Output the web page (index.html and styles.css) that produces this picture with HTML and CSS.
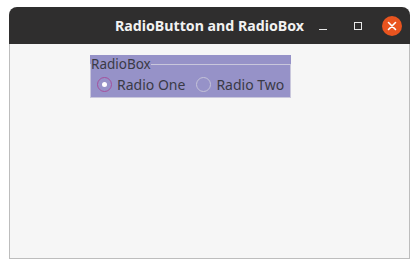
FILE: index.html
```html
<!DOCTYPE html>
<html lang="en">
<head>
    <meta charset="UTF-8">
    <title>RadioButton and RadioBox</title>
    <link rel="stylesheet" href="styles.css">
</head>
<body>
    <div class="window">
        <div class="titlebar">
            <span></span>
            <span class="title">RadioButton and RadioBox</span>
            <div class="controls">
                <span class="btn-min"></span>
                <span class="btn-max"></span>
                <span class="btn-close">
                    <svg width="20" height="20" viewBox="0 0 20 20">
                        <path d="M6.5 6.5 L13.5 13.5 M13.5 6.5 L6.5 13.5" stroke="#fff" stroke-width="1.6" stroke-linecap="round"/>
                    </svg>
                </span>
            </div>
        </div>
        <div class="content">
            <div class="radiobox">
                <fieldset>
                    <legend>RadioBox</legend>
                    <div class="options">
                        <label class="option"><span class="radio checked"></span>Radio One</label>
                        <label class="option"><span class="radio"></span>Radio Two</label>
                    </div>
                </fieldset>
            </div>
        </div>
    </div>
</body>
</html>
```

FILE: styles.css
```css
body {
    margin: 0;
    background-color: #ffffff;
    font-family: "Noto Sans", "DejaVu Sans", sans-serif;
}
.window {
    margin: 7px 0 0 9px;
    width: 401px;
    height: 252px;
    display: flex;
    flex-direction: column;
}
.titlebar {
    height: 37px;
    background-color: #2f2e2e;
    border-radius: 8px 8px 0 0;
    display: grid;
    grid-template-columns: 1fr auto 1fr;
    align-items: center;
}
.title {
    color: #f2f2f2;
    font-weight: bold;
    font-size: 14.2px;
}
.controls {
    display: flex;
    justify-content: flex-end;
    align-items: center;
    padding-right: 8px;
}
.btn-min {
    width: 8px;
    height: 1px;
    background-color: #e8e8e8;
    margin-top: 7px;
    margin-right: 27px;
}
.btn-max {
    width: 6px;
    height: 6px;
    border: 1px solid #e8e8e8;
    margin-right: 20px;
}
.btn-close {
    width: 20px;
    height: 20px;
    border-radius: 50%;
    background-color: #e9541f;
    display: flex;
}
.content {
    flex: 1;
    background-color: #f6f6f6;
    border: 1px solid #bdbdbd;
    border-top: none;
    padding: 11px 0 0 80px;
}
.radiobox {
    width: 201px;
    background-color: #9692c8;
}
fieldset {
    margin: 0;
    padding: 0;
    border: 1px solid #c9c7dc;
}
legend {
    padding: 0;
    font-size: 13.5px;
    line-height: 18px;
    color: #3a3a46;
}
.options {
    display: flex;
    align-items: center;
    padding: 3px 0 4px 6px;
    gap: 11px;
}
.option {
    display: flex;
    align-items: center;
    gap: 5px;
    font-size: 14px;
    line-height: 17px;
    color: #3a3a46;
}
.radio {
    width: 13px;
    height: 13px;
    border: 1px solid #c5c3d8;
    border-radius: 50%;
    display: flex;
    align-items: center;
    justify-content: center;
}
.radio.checked {
    border-color: #a5509c;
}
.radio.checked::after {
    content: "";
    width: 5px;
    height: 5px;
    border-radius: 50%;
    background-color: #ffffff;
}
```
